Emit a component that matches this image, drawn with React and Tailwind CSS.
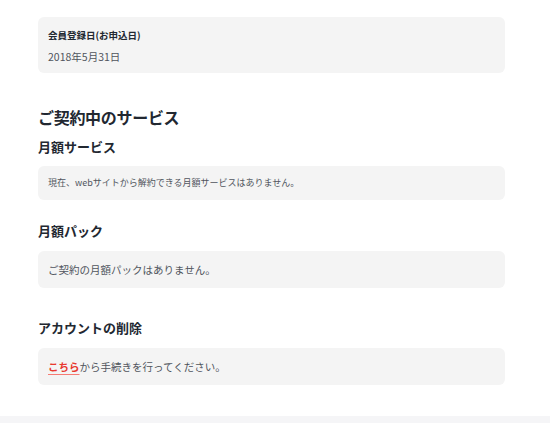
export default function App() {
  return (
    <div
      className="min-h-screen bg-white text-[#222831]"
      style={{ fontFamily: '"Noto Sans CJK JP", "Noto Sans", sans-serif' }}
    >
      <main className="ml-[38px] w-[467px] pt-[17px]">
        {/* 会員登録日 */}
        <div className="rounded-md bg-[#f4f4f4] px-[10px] pt-[10px] pb-[7px]">
          <p className="text-[9.5px] font-bold leading-[16px] text-[#222831]">
            会員登録日(お申込日)
          </p>
          <p className="mt-[5px] text-[10.5px] leading-[18px] text-[#50555d]">
            2018年5月31日
          </p>
        </div>

        <h2 className="mt-[32px] text-[16px] font-bold leading-[24px] tracking-[-0.3px]">
          ご契約中のサービス
        </h2>

        <h3 className="mt-[8px] text-[13px] font-bold leading-[20px]">月額サービス</h3>
        <div className="mt-[9px] rounded-md bg-[#f4f4f4] px-[10px] py-[10px]">
          <p className="text-[9px] leading-[14px] text-[#50555d]">
            現在、webサイトから解約できる月額サービスはありません。
          </p>
        </div>

        <h3 className="mt-[21px] text-[13px] font-bold leading-[20px]">月額パック</h3>
        <div className="mt-[10px] rounded-md bg-[#f4f4f4] px-[10px] py-[10px]">
          <p className="text-[10.5px] leading-[17px] text-[#50555d]">
            ご契約の月額パックはありません。
          </p>
        </div>

        <h3 className="mt-[30px] text-[13px] font-bold leading-[20px]">アカウントの削除</h3>
        <div className="mt-[10px] rounded-md bg-[#f4f4f4] px-[10px] py-[10px]">
          <p className="text-[10.5px] leading-[17px] text-[#50555d]">
            <a
              href="#"
              className="font-bold text-[#e8382f] underline decoration-[#f57b74] underline-offset-[3px]"
            >
              こちら
            </a>
            から手続きを行ってください。
          </p>
        </div>
      </main>

      <footer className="mt-[31px] h-[40px] bg-[#f5f5f7]" />
    </div>
  );
}
